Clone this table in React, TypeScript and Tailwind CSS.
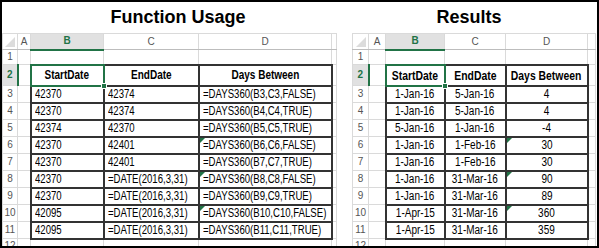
const GREEN = "#217346";

type Row = { n: number; b: string; c: string; d: string; flag?: boolean };

const usage: Row[] = [
  { n: 3, b: "42370", c: "42374", d: "=DAYS360(B3,C3,FALSE)" },
  { n: 4, b: "42370", c: "42374", d: "=DAYS360(B4,C4,TRUE)" },
  { n: 5, b: "42374", c: "42370", d: "=DAYS360(B5,C5,TRUE)" },
  { n: 6, b: "42370", c: "42401", d: "=DAYS360(B6,C6,FALSE)", flag: true },
  { n: 7, b: "42370", c: "42401", d: "=DAYS360(B7,C7,TRUE)" },
  { n: 8, b: "42370", c: "=DATE(2016,3,31)", d: "=DAYS360(B8,C8,FALSE)", flag: true },
  { n: 9, b: "42370", c: "=DATE(2016,3,31)", d: "=DAYS360(B9,C9,TRUE)" },
  { n: 10, b: "42095", c: "=DATE(2016,3,31)", d: "=DAYS360(B10,C10,FALSE)", flag: true },
  { n: 11, b: "42095", c: "=DATE(2016,3,31)", d: "=DAYS360(B11,C11,TRUE)" },
];

const results: Row[] = [
  { n: 3, b: "1-Jan-16", c: "5-Jan-16", d: "4" },
  { n: 4, b: "1-Jan-16", c: "5-Jan-16", d: "4" },
  { n: 5, b: "5-Jan-16", c: "1-Jan-16", d: "-4" },
  { n: 6, b: "1-Jan-16", c: "1-Feb-16", d: "30", flag: true },
  { n: 7, b: "1-Jan-16", c: "1-Feb-16", d: "30" },
  { n: 8, b: "1-Jan-16", c: "31-Mar-16", d: "90", flag: true },
  { n: 9, b: "1-Jan-16", c: "31-Mar-16", d: "89" },
  { n: 10, b: "1-Apr-15", c: "31-Mar-16", d: "360", flag: true },
  { n: 11, b: "1-Apr-15", c: "31-Mar-16", d: "359" },
];

function Flag() {
  return (
    <svg className="absolute left-0 top-0" width="5" height="5" viewBox="0 0 5 5">
      <path d="M0 0H5L0 5Z" fill={GREEN} />
    </svg>
  );
}

function Corner() {
  return (
    <svg className="absolute right-[2px] bottom-[2px]" width="10" height="10" viewBox="0 0 10 10">
      <path d="M10 0V10H0Z" fill="#dcdcdc" />
    </svg>
  );
}

// Excel text is narrow (Calibri, squashed by the screenshot); squeeze Liberation Sans to match
function Txt({ children, centered }: { children: React.ReactNode; centered: boolean }) {
  return centered ? (
    <div className="flex justify-center">
      <span className="whitespace-nowrap scale-x-[0.8] origin-center">{children}</span>
    </div>
  ) : (
    <div className="flex justify-start pl-[3px]">
      <span className="whitespace-nowrap scale-x-[0.8] origin-left">{children}</span>
    </div>
  );
}

function Sheet({ widths, centered, rows }: { widths: number[]; centered: boolean; rows: Row[] }) {
  const total = widths.reduce((a, b) => a + b, 0);
  const grid = "border border-[#dadada]";
  const hdr = "border border-[#dadada] border-b-[#bdbdbd] text-[10px] font-normal text-[#555] text-center p-0";
  const num = "border border-[#dadada] text-[10px] text-[#555] text-center p-0";
  const cell = "border-2 border-[#333] p-0 relative overflow-hidden";
  const data = centered ? "text-[12.5px]" : "text-[12px]";
  const head = centered ? "font-bold text-[13px]" : "font-bold text-[12.5px]";
  return (
    <table className="border-collapse table-fixed leading-none" style={{ width: total }}>
      <colgroup>
        {widths.map((w, i) => (
          <col key={i} style={{ width: w }} />
        ))}
      </colgroup>
      <tbody>
        <tr className="h-[16px]">
          <th className={hdr + " relative"}>
            <Corner />
          </th>
          <th className={hdr}>A</th>
          <th className="border border-[#dadada] border-b-2 border-b-[#217346] bg-[#e1e1e1] text-[10px] font-bold text-[#217346] text-center p-0">
            B
          </th>
          <th className={hdr}>C</th>
          <th className={hdr}>D</th>
          <th className={hdr}></th>
        </tr>
        <tr className="h-[15px]">
          <td className={num}>1</td>
          <td className={grid}></td>
          <td className={grid}></td>
          <td className={grid}></td>
          <td className={grid}></td>
          <td className={grid}></td>
        </tr>
        <tr className="h-[21px]">
          <td className="border border-[#dadada] border-r-2 border-r-[#217346] bg-[#e1e1e1] text-[10px] font-bold text-[#217346] text-center p-0">
            2
          </td>
          <td className={grid}></td>
          <td className={"border-2 border-[#217346] p-0 relative " + head}>
            <Txt centered>StartDate</Txt>
            <span className="absolute -right-[4px] -bottom-[4px] w-[6px] h-[6px] bg-[#217346] border border-white z-10"></span>
          </td>
          <td className={cell + " " + head}>
            <Txt centered>EndDate</Txt>
          </td>
          <td className={cell + " " + head}>
            <Txt centered>Days Between</Txt>
          </td>
          <td className={grid}></td>
        </tr>
        {rows.map((r) => (
          <tr key={r.n} className="h-[17px]">
            <td className={num}>{r.n}</td>
            <td className={grid}></td>
            <td className={cell + " " + data}>
              <Txt centered={centered}>{r.b}</Txt>
            </td>
            <td className={cell + " " + data}>
              <Txt centered={centered}>{r.c}</Txt>
            </td>
            <td className={cell + " " + data}>
              {r.flag && <Flag />}
              <Txt centered={centered}>{r.d}</Txt>
            </td>
            <td className={grid}></td>
          </tr>
        ))}
        <tr className="h-[17px]">
          <td className={num + " align-top pt-[2px]"}>12</td>
          <td className={grid}></td>
          <td className={grid}></td>
          <td className={grid}></td>
          <td className={grid}></td>
          <td className={grid}></td>
        </tr>
      </tbody>
    </table>
  );
}

export default function App() {
  return (
    <div className="w-[599px] h-[248px] border-2 border-black bg-white overflow-hidden font-['Liberation_Sans',Arial,sans-serif] text-black">
      <div className="flex">
        <div className="w-[334px] flex flex-col">
          <div className="h-[31px] pt-[6px] pl-[28px] w-[324px] text-center font-bold text-[18px] leading-[18px]">
            Function Usage
          </div>
          <Sheet widths={[15, 13, 73, 95, 133, 5]} centered={false} rows={usage} />
        </div>
        <div className="ml-[16px] w-[243px] flex flex-col">
          <div className="h-[31px] pt-[6px] w-[234px] text-center font-bold text-[18px] leading-[18px]">
            Results
          </div>
          <Sheet widths={[16, 17, 59, 61, 82, 8]} centered={true} rows={results} />
        </div>
      </div>
    </div>
  );
}
